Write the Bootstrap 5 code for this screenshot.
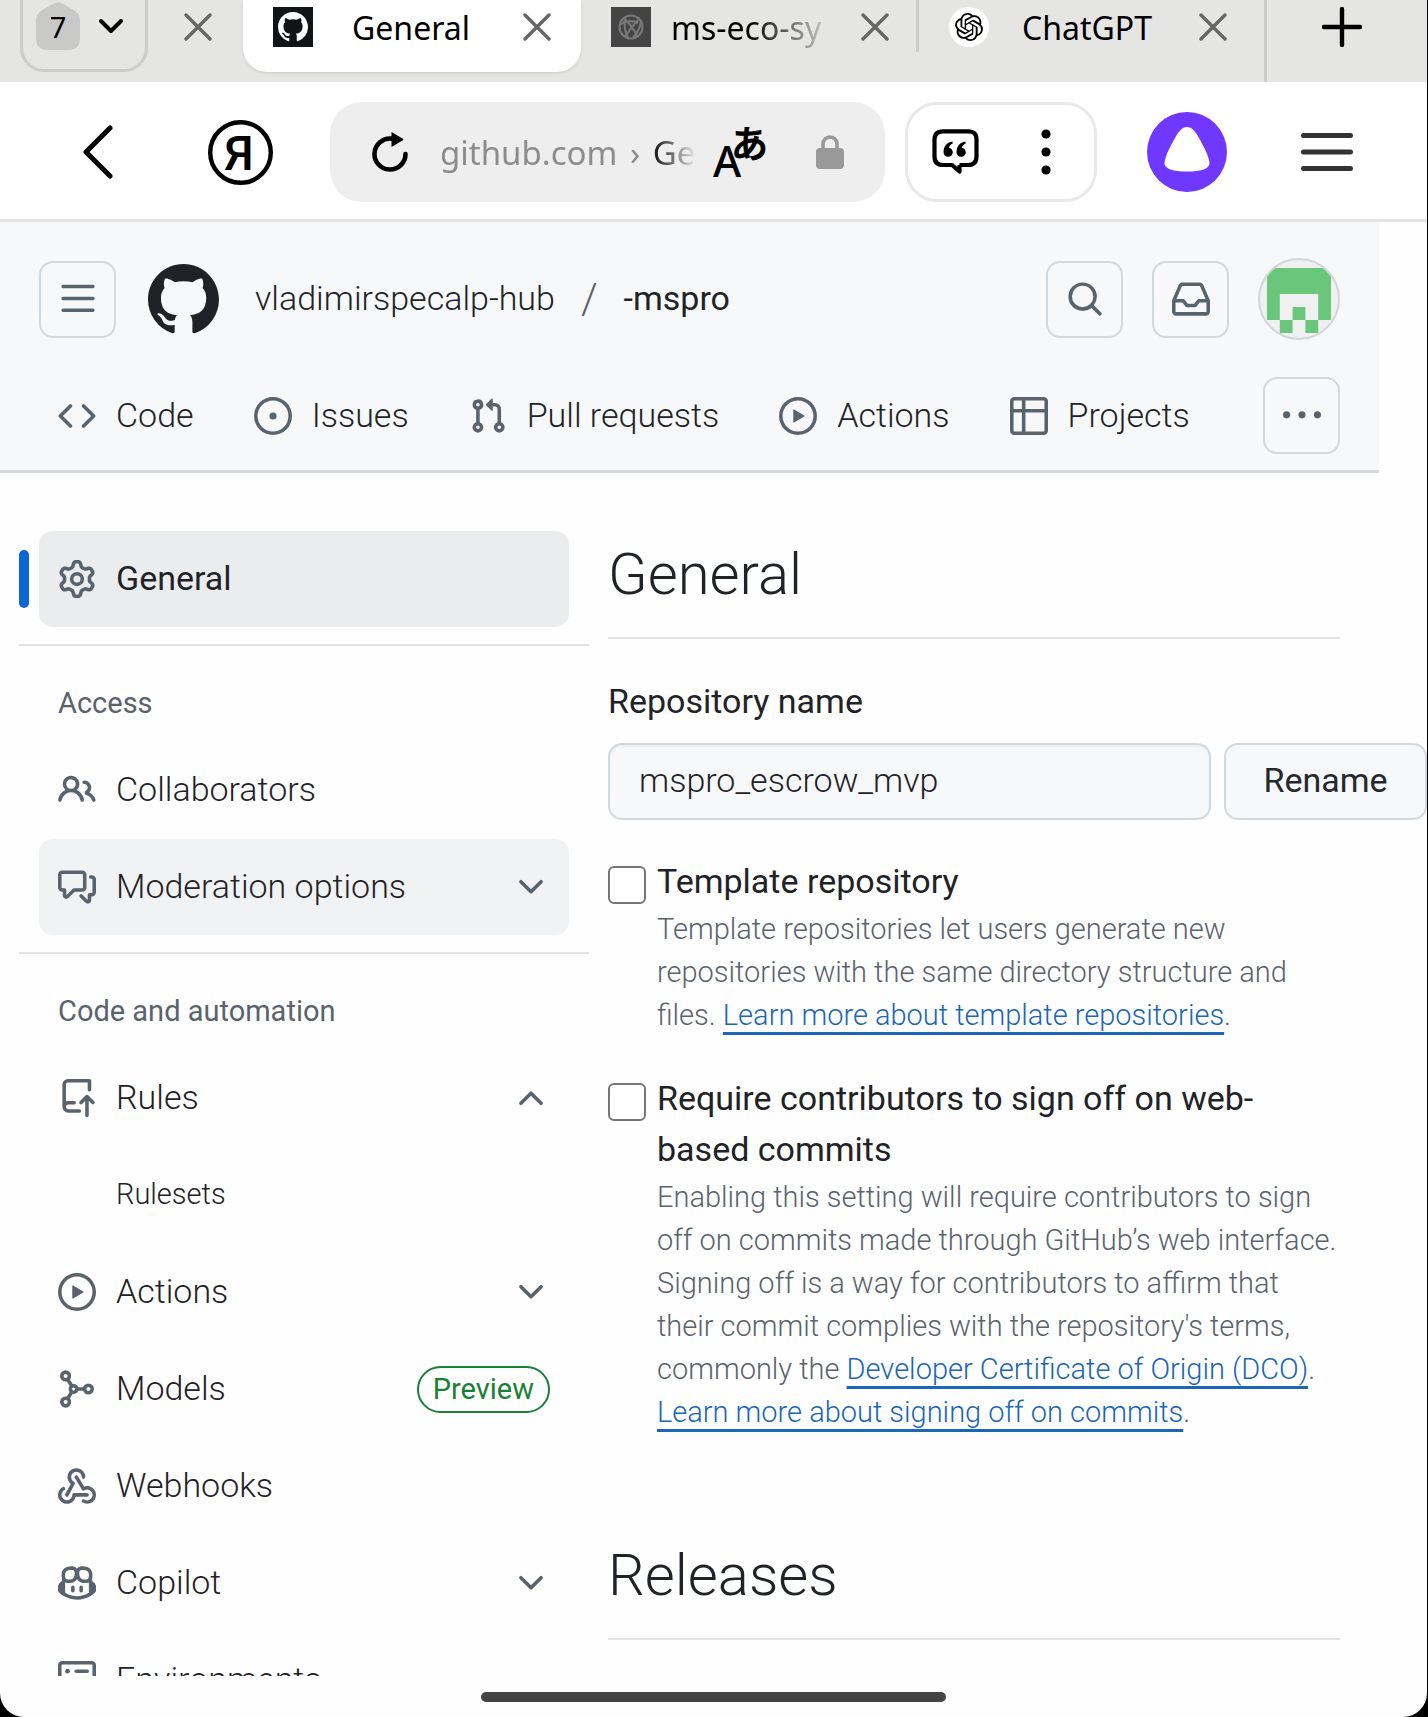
<!DOCTYPE html>
<html lang="en">
<head>
<meta charset="utf-8">
<meta name="viewport" content="width=device-width, initial-scale=1">
<title>General</title>
<link href="https://cdn.jsdelivr.net/npm/bootstrap@5.3.0/dist/css/bootstrap.min.css" rel="stylesheet">
<style>
  :root { --ink:#1f2328; --muted:#59636e; --line:#d1d9e0; --soft:#f6f8fa; --blue:#0b66d4; --link:#1b66b5; }
  body { background:#000; color:var(--ink); font-family:Roboto,"Noto Sans",sans-serif; font-size:34px; font-weight:300; line-height:51px; }
  svg { display:block; flex:none; }
  button { color:inherit; font-weight:inherit; }
  .plain { background:none; border:0; padding:0; display:flex; align-items:center; justify-content:center; flex:none; }
  .screen { height:100vh; margin-right:1px; background:#fefefe; border-radius:0 0 24px 24px; }
  .medium { font-weight:450; }

  /* browser tab strip */
  .strip { height:82px; background:#e5e5e3; color:#000; font-family:"Noto Sans",sans-serif; font-size:32px; font-weight:400; flex:none; }
  .strip-cell { height:72px; padding-bottom:18px; display:flex; align-items:center; flex:none; }
  .tab-count { width:128px; margin-left:20px; padding:0 21px 18px 13px; border:3px solid #ccccca; border-top:0; border-radius:0 0 24px 24px; justify-content:space-between; }
  .tab-home { position:relative; width:44px; height:48px; }
  .tab-home svg { position:absolute; inset:0; }
  .tab-home span { position:relative; display:block; text-align:center; line-height:50px; font-size:29px; }
  .first-x { width:95px; justify-content:center; padding-left:4px; }
  .page-tab { width:338px; padding:0 30px 18px; color:#000; text-decoration:none; }
  .page-tab.active { background:#fff; border-radius:0 0 24px 24px; box-shadow:0 1px 3px rgba(0,0,0,.12); }
  .tab-title { flex:1; min-width:0; margin:0 34px 0 20px; text-align:center; white-space:nowrap; }
  .fade-end { text-align:left; -webkit-mask-image:linear-gradient(90deg,#000 50%,rgba(0,0,0,.1)); mask-image:linear-gradient(90deg,#000 50%,rgba(0,0,0,.1)); }
  .tab-sep { width:3px; height:52px; margin-left:-3px; background:#ccccca; flex:none; }
  .new-tab { height:82px; padding:0 11px 28px 0; margin-left:7px; flex:1; border-left:3px solid #ccccca; justify-content:center; }

  /* browser toolbar */
  .toolbar { height:140px; padding:20px 74px 17px 58px; background:#fff; border-bottom:3px solid #e3e3e3; color:#000; flex:none; font-family:"Noto Sans",sans-serif; font-size:33px; font-weight:400; }
  .back { width:80px; height:80px; margin-right:70px; }
  .address { height:100px; margin-left:57px; padding:0 41px 0 42px; background:#eee; border-radius:32px; flex:1; min-width:0; }
  .address-text { flex:1; min-width:0; margin:0 19px 0 32px; white-space:nowrap; color:#8c8c8c; justify-content:flex-start; line-height:51px;
    -webkit-mask-image:linear-gradient(90deg,#000 84%,transparent 101%); mask-image:linear-gradient(90deg,#000 84%,transparent 101%); }
  .address-text b { font-weight:400; color:#111; }
  .lock { margin-left:49px; }
  .tools { width:192px; height:100px; margin-left:20px; padding:0 38px 0 24px; border:3px solid #e9e9e9; border-radius:32px; justify-content:space-between; }
  .alice { margin:0 74px 0 50px; }

  /* repository header */
  .repo-head { margin-right:48px; padding:36px 39px 16px; background:var(--soft); border-bottom:3px solid var(--line); color:var(--ink); }
  .repo-head a, .side a, .side button { color:var(--ink); text-decoration:none; }
  .square { width:77px; height:77px; border:2px solid var(--line); border-radius:14px; color:var(--muted); background:none; padding:0; display:flex; align-items:center; justify-content:center; flex:none; }
  .ico { width:38px; height:38px; fill:currentColor; color:var(--muted); }
  .crumbs { padding-bottom:2px; }
  .crumb-slash { margin:0 26px; color:var(--muted); font-size:42px; }
  .head-actions { gap:29px; }
  .avatar { width:82px; height:82px; border-radius:50%; border:2px solid #d3d6d9; background:#f0f0f0; overflow:hidden; }
  .nav-line { padding-top:37px; }
  .repo-nav { gap:60px; padding-left:19px; }
  .repo-nav a { display:flex; align-items:center; gap:20px; white-space:nowrap; }

  /* settings */
  .settings { margin-right:49px; padding:58px 38px 0 19px; gap:19px; }
  .side { width:570px; flex:none; }
  .side-row { width:auto; min-height:96px; margin:0 20px 1px 20px; padding:0 19px; display:flex; align-items:center; gap:20px; border-radius:14px; }
  .side-row > span:not(.preview) { padding-bottom:2px; }
  button.side-row { width:530px; border:0; background:none; text-align:left; }
  .side-row.current { position:relative; background:#ebecee; }
  .side-row.current::before { content:""; position:absolute; left:-20px; top:19px; width:10px; height:58px; border-radius:5px; background:var(--blue); }
  button.side-row.hovered { background:#f1f2f4; }
  .side-row .fine { padding-left:58px; }
  .fine { font-size:29px; line-height:43px; }
  .rule { height:2px; margin-top:17px; background:#dfe3e7; }
  .side-title { margin:36px 39px 17px; color:var(--muted); font-weight:450; font-size:29px; line-height:43px; }
  .preview { height:47px; padding:0 14px; border:2px solid #1a7f37; border-radius:24px; color:#1a7f37; font-size:29px; line-height:42px; font-weight:400; }
  .big-title { margin:0; padding-bottom:19px; border-bottom:2px solid #dfe3e7; font-size:58px; line-height:87px; font-weight:300; }
  .after-form { margin-top:98px; }
  .name-label { margin:37px 0 16px; }
  .rename-row { gap:13px; margin-right:-87px; }
  .rename-row .form-control { height:77px; padding:0 29px 4px; font-size:34px; font-weight:300; color:var(--ink); background:var(--soft); border:2px solid var(--line); border-radius:14px; box-shadow:inset 0 2px 1px rgba(31,35,40,.04); }
  .rename-row .btn { width:203px; height:77px; padding:0 0 3px; flex:none; font-size:34px; font-weight:400; color:#25292e; background:var(--soft); border:2px solid var(--line); border-radius:14px; }
  .option { margin-top:36px; gap:11px; }
  .option .form-check-input { width:38px; height:38px; margin:10px 0 0; border:2px solid #767676; border-radius:6px; flex:none; }
  .option p { margin:1px 0 0; color:var(--muted); }
  .option p a { color:var(--link); text-decoration:underline; text-decoration-thickness:3px; text-underline-offset:7px; text-decoration-skip-ink:none; }
  .home-zone { height:41px; flex:none; }
  .home-bar { width:465px; height:10px; border-radius:5px; background:#444; }
</style>
<script src="https://cdn.jsdelivr.net/npm/bootstrap@5.3.0/dist/js/bootstrap.bundle.min.js"></script>
</head>
<body>
<svg width="0" height="0" class="position-absolute" aria-hidden="true">
  <defs>
    <symbol id="i-close" viewBox="0 0 28 28"><path d="M2 2l24 24M26 2L2 26" fill="none" stroke="#666" stroke-width="3.4" stroke-linecap="round"/></symbol>
    <symbol id="i-mark" viewBox="0 0 16 16"><path d="M8 0c4.42 0 8 3.58 8 8a8.013 8.013 0 0 1-5.45 7.59c-.4.08-.55-.17-.55-.38 0-.27.01-1.13.01-2.2 0-.75-.25-1.23-.54-1.48 1.78-.2 3.65-.88 3.65-3.95 0-.88-.31-1.59-.82-2.15.08-.2.36-1.02-.08-2.12 0 0-.67-.22-2.2.82-.64-.18-1.32-.27-2-.27-.68 0-1.36.09-2 .27-1.53-1.03-2.2-.82-2.2-.82-.44 1.1-.16 1.92-.08 2.12-.51.56-.82 1.28-.82 2.15 0 3.06 1.86 3.75 3.64 3.95-.23.2-.44.55-.51 1.07-.46.21-1.61.55-2.33-.66-.15-.24-.6-.83-1.23-.82-.67.01-.27.38.01.53.34.19.73.9.82 1.13.16.45.68 1.31 2.69.94 0 .67.01 1.3.01 1.49 0 .21-.15.45-.55.38A7.995 7.995 0 0 1 0 8c0-4.42 3.58-8 8-8Z"/></symbol>
    <symbol id="i-play" viewBox="0 0 16 16"><path d="M8 0a8 8 0 1 1 0 16A8 8 0 0 1 8 0ZM1.5 8a6.5 6.5 0 1 0 13 0 6.5 6.5 0 0 0-13 0Zm4.879-2.773 4.264 2.559a.25.25 0 0 1 0 .428l-4.264 2.559A.25.25 0 0 1 6 10.559V5.442a.25.25 0 0 1 .379-.215Z"/></symbol>
    <symbol id="i-down" viewBox="0 0 16 16"><path d="M12.78 5.22a.749.749 0 0 1 0 1.06l-4.25 4.25a.749.749 0 0 1-1.06 0L3.22 6.28a.749.749 0 1 1 1.06-1.06L8 8.939l3.72-3.719a.749.749 0 0 1 1.06 0Z"/></symbol>
  </defs>
</svg>

<div class="screen d-flex flex-column overflow-hidden">
  <div class="strip d-flex align-items-start">
    <button class="plain strip-cell tab-count" aria-label="Open tabs">
      <span class="tab-home"><svg width="44" height="48" viewBox="0 0 44 48"><path d="M22 0c2 0 14 7 17 9s5 5 5 9v18c0 8-4 12-12 12H12C4 48 0 44 0 36V18c0-4 2-7 5-9S20 0 22 0Z" fill="#c9c9c8"/></svg><span>7</span></span>
      <svg width="26" height="16" viewBox="0 0 26 16"><path d="M3 3l10 10L23 3" fill="none" stroke="#000" stroke-width="4" stroke-linecap="round" stroke-linejoin="round"/></svg>
    </button>
    <div class="strip-cell first-x"><button class="plain" aria-label="Close tab"><svg width="28" height="28"><use href="#i-close"/></svg></button></div>
    <div class="strip-cell page-tab active">
      <svg width="40" height="40" viewBox="0 0 40 40"><path fill="#101417" d="M0 0h40v40H0z"/><svg x="5" y="5" width="30" height="30" fill="#fff"><use href="#i-mark"/></svg></svg>
      <span class="tab-title">General</span>
      <button class="plain" aria-label="Close tab"><svg width="28" height="28"><use href="#i-close"/></svg></button>
    </div>
    <div class="strip-cell page-tab">
      <svg width="40" height="40" viewBox="0 0 40 40"><path fill="#444" d="M0 0h40v40H0z"/><g fill="none" stroke="#777" stroke-width="2.2"><circle cx="20" cy="20" r="11.5"/><path d="M13 11c5 5 11 12 13 19M28 12c-5 5-10 11-14 18M14 11c-1 7 0 14 3 20M10 17c5-3 12-4 17-1M30 15c-1 6-4 11-8 16"/></g></svg>
      <span class="tab-title fade-end">ms-eco-sy</span>
      <button class="plain" aria-label="Close tab"><svg width="28" height="28"><use href="#i-close"/></svg></button>
    </div>
    <div class="tab-sep"></div>
    <div class="strip-cell page-tab">
      <svg width="40" height="40" viewBox="0 0 40 40"><circle cx="20" cy="20" r="20" fill="#fff"/><svg x="6" y="6" width="28" height="28" viewBox="0 0 24 24"><path d="M22.2819 9.8211a5.9847 5.9847 0 0 0-.5157-4.9108 6.0462 6.0462 0 0 0-6.5098-2.9A6.0651 6.0651 0 0 0 4.9807 4.1818a5.9847 5.9847 0 0 0-3.9977 2.9 6.0462 6.0462 0 0 0 .7427 7.0966 5.98 5.98 0 0 0 .511 4.9107 6.051 6.051 0 0 0 6.5146 2.9001A5.9847 5.9847 0 0 0 13.2599 24a6.0557 6.0557 0 0 0 5.7718-4.2058 5.9894 5.9894 0 0 0 3.9977-2.9001 6.0557 6.0557 0 0 0-.7475-7.0729zm-9.022 12.6081a4.4755 4.4755 0 0 1-2.8764-1.0408l.1419-.0804 4.7783-2.7582a.7948.7948 0 0 0 .3927-.6813v-6.7369l2.02 1.1686a.071.071 0 0 1 .038.052v5.5826a4.504 4.504 0 0 1-4.4945 4.4944zm-9.6607-4.1254a4.4708 4.4708 0 0 1-.5346-3.0137l.142.0852 4.783 2.7582a.7712.7712 0 0 0 .7806 0l5.8428-3.3685v2.3324a.0804.0804 0 0 1-.0332.0615L9.74 19.9502a4.4992 4.4992 0 0 1-6.1408-1.6464zM2.3408 7.8956a4.485 4.485 0 0 1 2.3655-1.9728V11.6a.7664.7664 0 0 0 .3879.6765l5.8144 3.3543-2.0201 1.1685a.0757.0757 0 0 1-.071 0l-4.8303-2.7865A4.504 4.504 0 0 1 2.3408 7.872zm16.5963 3.8558L13.1038 8.364 15.1192 7.2a.0757.0757 0 0 1 .071 0l4.8303 2.7913a4.4944 4.4944 0 0 1-.6765 8.1042v-5.6772a.79.79 0 0 0-.407-.667zm2.0107-3.0231l-.142-.0852-4.7735-2.7818a.7759.7759 0 0 0-.7854 0L9.409 9.2297V6.8974a.0662.0662 0 0 1 .0284-.0615l4.8303-2.7866a4.4992 4.4992 0 0 1 6.6802 4.66zM8.3065 12.863l-2.02-1.1638a.0804.0804 0 0 1-.038-.0567V6.0742a4.4992 4.4992 0 0 1 7.3757-3.4537l-.142.0805L8.704 5.459a.7948.7948 0 0 0-.3927.6813zm1.0976-2.3654l2.602-1.4998 2.6069 1.4998v2.9994l-2.5974 1.4997-2.6067-1.4997Z"/></svg></svg>
      <span class="tab-title">ChatGPT</span>
      <button class="plain" aria-label="Close tab"><svg width="28" height="28"><use href="#i-close"/></svg></button>
    </div>
    <div class="strip-cell new-tab"><button class="plain" aria-label="New tab"><svg width="40" height="40" viewBox="0 0 40 40"><path d="M20 2v36M2 20h36" stroke="#000" stroke-width="4.4" stroke-linecap="round"/></svg></button></div>
  </div>

  <div class="toolbar d-flex align-items-center">
    <button class="plain back" aria-label="Back"><svg width="30" height="54" viewBox="0 0 30 54"><path d="M27 3L3 27l24 24" fill="none" stroke="#000" stroke-width="5" stroke-linecap="round" stroke-linejoin="round"/></svg></button>
    <button class="plain" aria-label="Yandex"><svg width="65" height="65" viewBox="0 0 65 65"><circle cx="32.5" cy="32.5" r="30.3" fill="none" stroke="#000" stroke-width="4.4"/><text x="31" y="50" text-anchor="middle" font-family="Roboto, sans-serif" font-size="48" font-weight="500">Я</text></svg></button>
    <div class="address d-flex align-items-center">
      <button class="plain" aria-label="Reload"><svg width="36" height="40" viewBox="0 0 36 40"><path d="M33.500 22a15.500 15.500 0 1 1-14-15.400" fill="none" stroke="#000" stroke-width="4.600" stroke-linecap="round"/><path d="M19.500 0l11 6.500c1 .7 1 1.300 0 2L19.500 15Z"/></svg></button>
      <button class="plain address-text"><span>github.com <span class="mx-1">›</span> <b>Ge</b></span></button>
      <button class="plain" aria-label="Translate"><svg width="54" height="52" viewBox="0 0 54 52"><text x="0" y="51" font-family="Noto Sans, sans-serif" font-size="43" font-weight="500">A</text><text x="18" y="32" font-family="Noto Sans CJK JP, sans-serif" font-size="37" font-weight="500" stroke="#000">あ</text></svg></button>
      <svg class="lock" width="28" height="34" viewBox="0 0 28 34" aria-hidden="true"><rect y="13" width="28" height="21" rx="4" fill="#999"/><path d="M7 15V9a7 7 0 0 1 14 0v6" fill="none" stroke="#999" stroke-width="3.6"/></svg>
    </div>
    <div class="tools d-flex align-items-center">
      <button class="plain" aria-label="Comments"><svg width="47" height="46" viewBox="0 0 47 46"><path d="M27.500 36H36q8.500 0 8.500-8.500v-17Q44.500 2.300 36 2.300H11Q2.500 2.300 2.500 10.500v17Q2.500 36 11 36h9l7.500 6.500V36" fill="none" stroke="#000" stroke-width="4.200" stroke-linejoin="round"/><path d="M20.500 12.500c-6 1-9 5-9 10.500 0 2.800 2 4.800 4.700 4.800s4.600-1.900 4.600-4.500-1.800-4.300-4-4.400c.5-2 1.800-3.600 3.900-4.400ZM33.500 12.500c-6 1-9 5-9 10.500 0 2.800 2 4.800 4.700 4.800s4.600-1.900 4.600-4.500-1.800-4.300-4-4.400c.5-2 1.800-3.600 3.900-4.400Z"/></svg></button>
      <button class="plain" aria-label="More"><svg width="20" height="46" viewBox="0 0 20 46"><circle cx="10" cy="5" r="4.600"/><circle cx="10" cy="23" r="4.600"/><circle cx="10" cy="41" r="4.600"/></svg></button>
    </div>
    <button class="plain alice" aria-label="Alice"><svg width="80" height="80" viewBox="0 0 80 80"><circle cx="40" cy="40" r="40" fill="#7037ff"/><path d="M40 15c5 0 8 4 12 11s10 18 10.500 25c.5 6-9 8.500-22.500 8.500S17 57 17.500 51C18 44 24 33 28 26s7-11 12-11Z" fill="#fff"/></svg></button>
    <button class="plain" aria-label="Menu"><svg width="52" height="38" viewBox="0 0 52 38"><path d="M2.500 2.500h47M2.500 19h47M2.500 35.500h47" stroke="#333" stroke-width="5" stroke-linecap="round"/></svg></button>
  </div>

  <div class="flex-grow-1 overflow-hidden" style="min-height:0">
    <header class="repo-head">
      <div class="d-flex align-items-center">
        <button class="square" aria-label="Open menu"><svg class="ico" viewBox="0 0 16 16"><path d="M1 2.750A.75.75 0 0 1 1.750 2h12.500a.75.75 0 0 1 0 1.500H1.750A.75.75 0 0 1 1 2.750Zm0 5A.75.75 0 0 1 1.750 7h12.500a.75.75 0 0 1 0 1.500H1.750A.75.75 0 0 1 1 7.750ZM1.750 12h12.500a.75.75 0 0 1 0 1.500H1.750a.75.75 0 0 1 0-1.500Z"/></svg></button>
        <a href="#" class="ms-4 px-2" aria-label="GitHub"><svg width="71" height="71" fill="#1f2328"><use href="#i-mark"/></svg></a>
        <nav class="crumbs d-flex ms-4 ps-1" aria-label="Breadcrumb"><a href="#">vladimirspecalp-hub</a><span class="crumb-slash">/</span><a href="#" class="medium">-mspro</a></nav>
        <div class="head-actions d-flex align-items-center ms-auto">
          <button class="square" aria-label="Search"><svg class="ico" viewBox="0 0 16 16"><path d="M10.680 11.740a6 6 0 0 1-7.922-8.982 6 6 0 0 1 8.982 7.922l3.040 3.040a.749.749 0 0 1-.326 1.275.749.749 0 0 1-.734-.215ZM11.500 7a4.499 4.499 0 1 0-8.997 0A4.499 4.499 0 0 0 11.500 7Z"/></svg></button>
          <button class="square" aria-label="Inbox"><svg class="ico" viewBox="0 0 16 16"><path d="M2.800 2.060A1.750 1.750 0 0 1 4.410 1h7.180c.7 0 1.333.417 1.610 1.060l2.740 6.395c.04.093.06.194.06.295v4.500A1.750 1.750 0 0 1 14.250 15H1.750A1.750 1.750 0 0 1 0 13.250v-4.500c0-.101.02-.202.06-.295Zm1.610.44a.25.25 0 0 0-.23.152L1.887 8H4.750a.75.75 0 0 1 .6.3L6.625 10h2.750l1.275-1.700a.75.75 0 0 1 .6-.3h2.863L11.820 2.652a.25.25 0 0 0-.23-.152Zm10.090 7h-2.875l-1.275 1.700a.75.75 0 0 1-.6.3h-3.500a.75.75 0 0 1-.6-.3L4.375 9.500H1.500v3.750c0 .138.112.25.25.25h12.500a.25.25 0 0 0 .25-.25Z"/></svg></button>
          <button class="plain avatar" aria-label="Account"><svg width="78" height="78" viewBox="-1 -1 78 78"><path fill="#69c67b" d="M6 7h64v52H57.200V33H18.800v26H6zM31.600 46h12.800v13H31.600zM18.800 59h12.800v13H18.800zM44.400 59h12.800v13H44.400z"/></svg></button>
        </div>
      </div>
      <div class="nav-line d-flex align-items-center">
        <nav class="repo-nav d-flex" aria-label="Repository">
          <a href="#"><svg class="ico" viewBox="0 0 16 16"><path d="m11.280 3.220 4.250 4.250a.75.75 0 0 1 0 1.060l-4.250 4.250a.749.749 0 0 1-1.275-.326.749.749 0 0 1 .215-.734L13.940 8l-3.720-3.720a.749.749 0 0 1 .326-1.275.749.749 0 0 1 .734.215Zm-6.560 0a.751.751 0 0 1 1.042.018.751.751 0 0 1 .018 1.042L2.060 8l3.720 3.720a.749.749 0 0 1-.326 1.275.749.749 0 0 1-.734-.215L.47 8.530a.75.75 0 0 1 0-1.060Z"/></svg>Code</a>
          <a href="#"><svg class="ico" viewBox="0 0 16 16"><path d="M8 9.500a1.500 1.500 0 1 0 0-3 1.500 1.500 0 0 0 0 3Z"/><path d="M8 0a8 8 0 1 1 0 16A8 8 0 0 1 8 0ZM1.500 8a6.500 6.500 0 1 0 13 0 6.500 6.500 0 0 0-13 0Z"/></svg>Issues</a>
          <a href="#"><svg class="ico" viewBox="0 0 16 16"><path d="M1.500 3.250a2.250 2.250 0 1 1 3 2.122v5.256a2.251 2.251 0 1 1-1.500 0V5.372A2.250 2.250 0 0 1 1.500 3.250Zm5.677-.177L9.573.677A.25.25 0 0 1 10 .854V2.500h1A2.500 2.500 0 0 1 13.500 5v5.628a2.251 2.251 0 1 1-1.500 0V5a1 1 0 0 0-1-1h-1v1.646a.25.25 0 0 1-.427.177L7.177 3.427a.25.25 0 0 1 0-.354ZM3.750 2.500a.75.75 0 1 0 0 1.500.75.75 0 0 0 0-1.500Zm0 9.500a.75.75 0 1 0 0 1.500.75.75 0 0 0 0-1.500Zm8.250.75a.75.75 0 1 0 1.500 0 .75.75 0 0 0-1.500 0Z"/></svg>Pull requests</a>
          <a href="#"><svg class="ico"><use href="#i-play"/></svg>Actions</a>
          <a href="#"><svg class="ico" viewBox="0 0 16 16"><path d="M0 1.750C0 .784.784 0 1.750 0h12.500C15.216 0 16 .784 16 1.750v12.500A1.750 1.750 0 0 1 14.250 16H1.750A1.750 1.750 0 0 1 0 14.250ZM6.500 6.500v8h7.750a.25.25 0 0 0 .25-.25V6.500Zm8-1.500V1.750a.25.25 0 0 0-.25-.25H6.500V5Zm-13 1.500v7.750c0 .138.112.25.25.25H5v-8ZM5 5V1.500H1.750a.25.25 0 0 0-.25.25V5Z"/></svg>Projects</a>
        </nav>
        <button class="square ms-auto" aria-label="More items"><svg class="ico" viewBox="0 0 16 16"><circle cx="1.500" cy="7.500" r="1.500"/><circle cx="8" cy="7.500" r="1.500"/><circle cx="14.500" cy="7.500" r="1.500"/></svg></button>
      </div>
    </header>

    <div class="settings d-flex align-items-start">
      <nav class="side" aria-label="Settings">
        <a href="#" class="side-row current medium"><svg class="ico" viewBox="0 0 16 16"><path d="M8 0a8.200 8.200 0 0 1 .701.031C9.444.095 9.990.645 10.160 1.290l.288 1.107c.018.066.079.158.212.224.231.114.454.243.668.386.123.082.233.09.299.071l1.103-.303c.644-.176 1.392.021 1.820.63.27.385.506.792.704 1.218.315.675.111 1.422-.364 1.891l-.814.806c-.049.048-.098.147-.088.294.016.257.016.515 0 .772-.01.147.038.246.088.294l.814.806c.475.469.679 1.216.364 1.891a7.977 7.977 0 0 1-.704 1.217c-.428.61-1.176.807-1.820.63l-1.102-.302c-.067-.019-.177-.011-.3.071a5.909 5.909 0 0 1-.668.386c-.133.066-.194.158-.211.224l-.29 1.106c-.168.646-.715 1.196-1.458 1.260a8.006 8.006 0 0 1-1.402 0c-.743-.064-1.289-.614-1.458-1.260l-.289-1.106c-.018-.066-.079-.158-.212-.224a5.738 5.738 0 0 1-.668-.386c-.123-.082-.233-.09-.299-.071l-1.103.303c-.644.176-1.392-.021-1.820-.63a8.120 8.120 0 0 1-.704-1.218c-.315-.675-.111-1.422.363-1.891l.815-.806c.05-.048.098-.147.088-.294a6.214 6.214 0 0 1 0-.772c.01-.147-.038-.246-.088-.294l-.815-.806C.635 6.045.431 5.298.746 4.623a7.920 7.920 0 0 1 .704-1.217c.428-.61 1.176-.807 1.820-.63l1.102.302c.067.019.177.011.3-.071.214-.143.437-.272.668-.386.133-.066.194-.158.211-.224l.29-1.106C6.009.645 6.556.095 7.299.03 7.530.01 7.764 0 8 0Zm-.571 1.525c-.036.003-.108.036-.137.146l-.289 1.105c-.147.561-.549.967-.998 1.189-.173.086-.34.183-.5.29-.417.278-.97.423-1.529.27l-1.103-.303c-.109-.03-.175.016-.195.045-.22.312-.412.644-.573.99-.014.031-.021.11.059.19l.815.806c.411.406.562.957.53 1.456a4.709 4.709 0 0 0 0 .582c.032.499-.119 1.050-.53 1.456l-.815.806c-.081.08-.073.159-.059.19.162.346.353.677.573.989.02.03.085.076.195.046l1.102-.303c.56-.153 1.113-.008 1.530.27.161.107.328.204.501.29.447.222.85.629.997 1.189l.289 1.105c.029.109.101.143.137.146a6.600 6.600 0 0 0 1.142 0c.036-.003.108-.036.137-.146l.289-1.105c.147-.561.549-.967.998-1.189.173-.086.34-.183.5-.29.417-.278.97-.423 1.529-.27l1.103.303c.109.029.175-.016.195-.045.22-.313.411-.644.573-.99.014-.031.021-.11-.059-.19l-.815-.806c-.411-.406-.562-.957-.53-1.456a4.709 4.709 0 0 0 0-.582c-.032-.499.119-1.050.53-1.456l.815-.806c.081-.08.073-.159.059-.19a6.464 6.464 0 0 0-.573-.989c-.02-.03-.085-.076-.195-.046l-1.102.303c-.56.153-1.113.008-1.530-.27a4.440 4.440 0 0 0-.501-.29c-.447-.222-.85-.629-.997-1.189l-.289-1.105c-.029-.11-.101-.143-.137-.146a6.600 6.600 0 0 0-1.142 0ZM11 8a3 3 0 1 1-6 0 3 3 0 0 1 6 0ZM9.500 8a1.500 1.500 0 1 0-3.001.001A1.500 1.500 0 0 0 9.500 8Z"/></svg><span>General</span></a>
        <div class="rule"></div>
        <h3 class="side-title">Access</h3>
        <a href="#" class="side-row"><svg class="ico" viewBox="0 0 16 16"><path d="M2 5.500a3.500 3.500 0 1 1 5.898 2.549 5.508 5.508 0 0 1 3.034 4.084.75.75 0 1 1-1.482.235 4 4 0 0 0-7.900 0 .75.75 0 0 1-1.482-.236A5.507 5.507 0 0 1 3.102 8.050 3.493 3.493 0 0 1 2 5.500ZM11 4a3.001 3.001 0 0 1 2.220 5.018 5.010 5.010 0 0 1 2.560 3.012.749.749 0 0 1-.885.954.752.752 0 0 1-.549-.514 3.507 3.507 0 0 0-2.522-2.372.75.75 0 0 1-.574-.73v-.352a.75.75 0 0 1 .416-.672A1.500 1.500 0 0 0 11 5.500.75.75 0 0 1 11 4Zm-5.500-.5a2 2 0 1 0-.001 3.999A2 2 0 0 0 5.500 3.500Z"/></svg><span>Collaborators</span></a>
        <button class="side-row hovered"><svg class="ico" viewBox="0 0 16 16"><path d="M1.750 1h8.500c.966 0 1.750.784 1.750 1.750v5.500A1.750 1.750 0 0 1 10.250 10H7.061l-2.574 2.573A1.458 1.458 0 0 1 2 11.543V10h-.25A1.750 1.750 0 0 1 0 8.250v-5.500C0 1.784.784 1 1.750 1ZM1.500 2.750v5.500c0 .138.112.25.25.25h1a.75.75 0 0 1 .75.75v2.190l2.720-2.720a.749.749 0 0 1 .53-.22h3.500a.25.25 0 0 0 .25-.25v-5.500a.25.25 0 0 0-.25-.25h-8.500a.25.25 0 0 0-.25.25Zm13 2a.25.25 0 0 0-.25-.25h-.5a.75.75 0 0 1 0-1.500h.5c.966 0 1.750.784 1.750 1.750v5.500A1.750 1.750 0 0 1 14.250 12H14v1.543a1.458 1.458 0 0 1-2.487 1.030L9.220 12.280a.749.749 0 0 1 .326-1.275.749.749 0 0 1 .734.215l2.220 2.220v-2.190a.75.75 0 0 1 .75-.75h1a.25.25 0 0 0 .25-.25Z"/></svg><span>Moderation options</span><svg class="ico ms-auto"><use href="#i-down"/></svg></button>
        <div class="rule"></div>
        <h3 class="side-title">Code and automation</h3>
        <button class="side-row"><svg class="ico" viewBox="0 0 16 16"><path d="M13.250 4.500V.75H4.200A1.600 1.600 0 0 0 2.600 2.350v9.300a1.800 1.800 0 0 0 1.800 1.800H9M2.600 11.300a1.800 1.800 0 0 1 1.700-1.300H6.800M12.200 15.300V7.800M9.700 9.900l2.500-2.500 2.500 2.500" fill="none" stroke="currentColor" stroke-width="1.500" stroke-linecap="round" stroke-linejoin="round"/></svg><span>Rules</span><svg class="ico ms-auto" viewBox="0 0 16 16"><path d="M3.220 10.780a.749.749 0 0 1 0-1.060l4.250-4.250a.749.749 0 0 1 1.060 0l4.250 4.250a.749.749 0 1 1-1.060 1.060L8 7.061l-3.720 3.719a.749.749 0 0 1-1.060 0Z"/></svg></button>
        <a href="#" class="side-row"><span class="fine">Rulesets</span></a>
        <button class="side-row"><svg class="ico"><use href="#i-play"/></svg><span>Actions</span><svg class="ico ms-auto"><use href="#i-down"/></svg></button>
        <a href="#" class="side-row"><svg class="ico" viewBox="0 0 16 16"><g fill="none" stroke="currentColor" stroke-width="1.500"><circle cx="3.200" cy="2.500" r="1.600"/><circle cx="3.200" cy="13.500" r="1.600"/><circle cx="6.600" cy="8" r="1.400"/><circle cx="12.800" cy="8" r="1.600"/><path d="M4 3.900l1.900 2.900M4 12.100l1.900-2.900M8 8h3.200"/></g></svg><span>Models</span><span class="preview ms-auto">Preview</span></a>
        <a href="#" class="side-row"><svg class="ico" viewBox="0 0 16 16"><path d="M5.500 4.250a2.250 2.250 0 0 1 4.500 0 .75.75 0 0 0 1.500 0 3.750 3.750 0 1 0-6.140 2.889l-2.272 4.258a.75.75 0 0 0 1.324.706L7 7.250a.75.75 0 0 0-.309-1.015A2.250 2.250 0 0 1 5.500 4.250Z"/><path d="M7.364 3.607a.75.75 0 0 1 1.030.257l2.608 4.349a3.750 3.750 0 1 1-.628 6.785.75.75 0 0 1 .752-1.299 2.250 2.250 0 1 0-.033-3.880.75.75 0 0 1-1.030-.256L7.107 4.636a.75.75 0 0 1 .257-1.030Z"/><path d="M2.900 8.776A.75.75 0 0 1 2.625 9.800 2.250 2.250 0 1 0 6 11.750a.75.75 0 0 1 .75-.751h5.500a.75.75 0 0 1 0 1.500H7.425a3.751 3.751 0 1 1-5.550-3.998.75.75 0 0 1 1.024.274Z"/></svg><span>Webhooks</span></a>
        <button class="side-row"><svg class="ico" viewBox="0 0 16 16"><path d="M7.998 15.035c-4.562 0-7.873-2.914-7.998-3.749V9.338c.085-.628.677-1.686 1.588-2.065.013-.07.024-.143.036-.218.029-.183.06-.384.126-.612-.201-.508-.254-1.084-.254-1.656 0-.87.128-1.769.693-2.484.579-.733 1.494-1.124 2.724-1.261 1.206-.134 2.262.034 2.944.765.05.053.096.108.139.165.044-.057.094-.112.143-.165.682-.731 1.738-.899 2.944-.765 1.230.137 2.145.528 2.724 1.261.566.715.693 1.614.693 2.484 0 .572-.053 1.148-.254 1.656.066.228.098.429.126.612.012.076.024.148.037.218.924.385 1.522 1.471 1.591 2.095v1.872c0 .766-3.351 3.795-8.002 3.795Zm0-1.485c2.280 0 4.584-1.110 5.002-1.433V7.862l-.023-.116c-.49.21-1.075.291-1.727.291-1.146 0-2.059-.327-2.710-.991A3.222 3.222 0 0 1 8 6.303a3.240 3.240 0 0 1-.544.743c-.65.664-1.563.991-2.710.991-.652 0-1.236-.081-1.727-.291l-.023.116v4.255c.419.323 2.722 1.433 5.002 1.433ZM6.762 2.830c-.193-.206-.637-.413-1.682-.297-1.019.113-1.479.404-1.713.7-.247.312-.369.789-.369 1.554 0 .793.129 1.171.308 1.371.162.181.519.379 1.442.379.853 0 1.339-.235 1.638-.54.315-.322.527-.827.617-1.553.117-.935-.037-1.395-.241-1.614Zm4.155-.297c-1.044-.116-1.488.091-1.681.297-.204.219-.359.679-.242 1.614.091.726.303 1.231.618 1.553.299.305.784.54 1.638.54.922 0 1.280-.198 1.442-.379.179-.2.308-.578.308-1.371 0-.765-.123-1.242-.37-1.554-.233-.296-.693-.587-1.713-.7Z"/><path d="M6.250 9.037a.75.75 0 0 1 .75.75v1.501a.75.75 0 0 1-1.500 0V9.787a.75.75 0 0 1 .75-.75Zm4.250.75v1.501a.75.75 0 0 1-1.500 0V9.787a.75.75 0 0 1 1.500 0Z"/></svg><span>Copilot</span><svg class="ico ms-auto"><use href="#i-down"/></svg></button>
        <a href="#" class="side-row"><svg class="ico" viewBox="0 0 16 16"><rect x=".75" y=".75" width="14.500" height="14.500" rx="1" fill="none" stroke="currentColor" stroke-width="1.500"/><circle cx="4" cy="4.300" r="1"/><path d="M7.700 4.300h4.600" stroke="currentColor" stroke-width="1.500" stroke-linecap="round"/></svg><span>Environments</span></a>
      </nav>

      <main class="flex-grow-1" style="min-width:0">
        <h2 class="big-title">General</h2>
        <form>
          <label for="repo-name" class="name-label medium d-block">Repository name</label>
          <div class="rename-row d-flex">
            <input id="repo-name" type="text" class="form-control" value="mspro_escrow_mvp">
            <button type="button" class="btn">Rename</button>
          </div>
          <div class="option d-flex align-items-start">
            <input class="form-check-input" type="checkbox" id="template">
            <div>
              <label for="template" class="medium d-block">Template repository</label>
              <p class="fine">Template repositories let users generate new repositories with the same directory structure and files. <a href="#">Learn more about template repositories</a>.</p>
            </div>
          </div>
          <div class="option d-flex align-items-start">
            <input class="form-check-input" type="checkbox" id="signoff">
            <div>
              <label for="signoff" class="medium d-block">Require contributors to sign off on web-based commits</label>
              <p class="fine">Enabling this setting will require contributors to sign off on commits made through GitHub’s web interface. Signing off is a way for contributors to affirm that their commit complies with the repository's terms, commonly the <a href="#">Developer Certificate of Origin (DCO)</a>. <a href="#">Learn more about signing off on commits</a>.</p>
            </div>
          </div>
        </form>
        <h2 class="big-title after-form">Releases</h2>
      </main>
    </div>
  </div>

  <div class="home-zone d-flex align-items-center justify-content-center"><div class="home-bar"></div></div>
</div>
</body>
</html>
